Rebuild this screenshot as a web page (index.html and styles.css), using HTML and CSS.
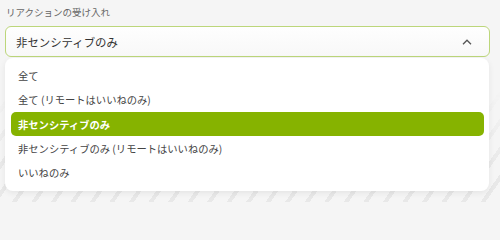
FILE: index.html
```html
<!DOCTYPE html>
<html lang="ja">
<head>
<meta charset="utf-8">
<link rel="stylesheet" href="styles.css">
</head>
<body>
<div class="bg"></div>
<div class="field">
  <div class="label">リアクションの受け入れ</div>
  <div class="select">
    <span class="value">非センシティブのみ</span>
    <svg class="chev" width="10" height="6" viewBox="0 0 10 6"><path d="M1 5.2 L5 1.2 L9 5.2" fill="none" stroke="#555" stroke-width="1.3"/></svg>
  </div>
  <div class="menu">
    <div class="item">全て</div>
    <div class="item">全て (リモートはいいねのみ)</div>
    <div class="item active">非センシティブのみ</div>
    <div class="item">非センシティブのみ (リモートはいいねのみ)</div>
    <div class="item">いいねのみ</div>
  </div>
</div>
</body>
</html>
```
FILE: styles.css
```css
html, body {
  margin: 0;
  padding: 0;
}
body {
  width: 500px;
  height: 202px;
  background: #f5f5f5;
  font-family: "Noto Sans CJK JP", "Noto Sans", sans-serif;
  position: relative;
  overflow: hidden;
}
.bg {
  position: absolute;
  inset: 0;
  background: repeating-linear-gradient(-55deg, transparent 0 12px, #e8e8e8 12px 16px);
  -webkit-mask-image: linear-gradient(to bottom, transparent 0, transparent 90px, #000 170px);
  mask-image: linear-gradient(to bottom, transparent 0, transparent 90px, #000 170px);
}
.field {
  position: relative;
  padding: 6px 10px 0 5px;
}
.label {
  font-size: 9.5px;
  line-height: 13px;
  color: #666;
  padding-left: 1px;
  margin-bottom: 7px;
}
.select {
  height: 31px;
  box-sizing: border-box;
  border: 1px solid #bcd67a;
  border-radius: 6px;
  background: linear-gradient(#fefefe, #f8f8f8);
  display: flex;
  align-items: center;
  justify-content: space-between;
  padding: 0 17px 0 10px;
}
.value {
  font-size: 11.4px;
  color: #333;
}
.chev {
  display: block;
  margin-top: 1px;
}
.menu {
  margin-top: 1px;
  margin-right: 1px;
  background: #fff;
  border-radius: 8px;
  box-shadow: 0 2px 6px rgba(0,0,0,0.07);
  padding: 5px 5px 6px 6px;
}
.item {
  height: 24.5px;
  display: flex;
  align-items: center;
  padding-left: 7px;
  font-size: 10.3px;
  color: #444;
  border-radius: 5px;
}
.item.active {
  background: #86b300;
  color: #fff;
  font-weight: bold;
  height: 24px;
}
```
